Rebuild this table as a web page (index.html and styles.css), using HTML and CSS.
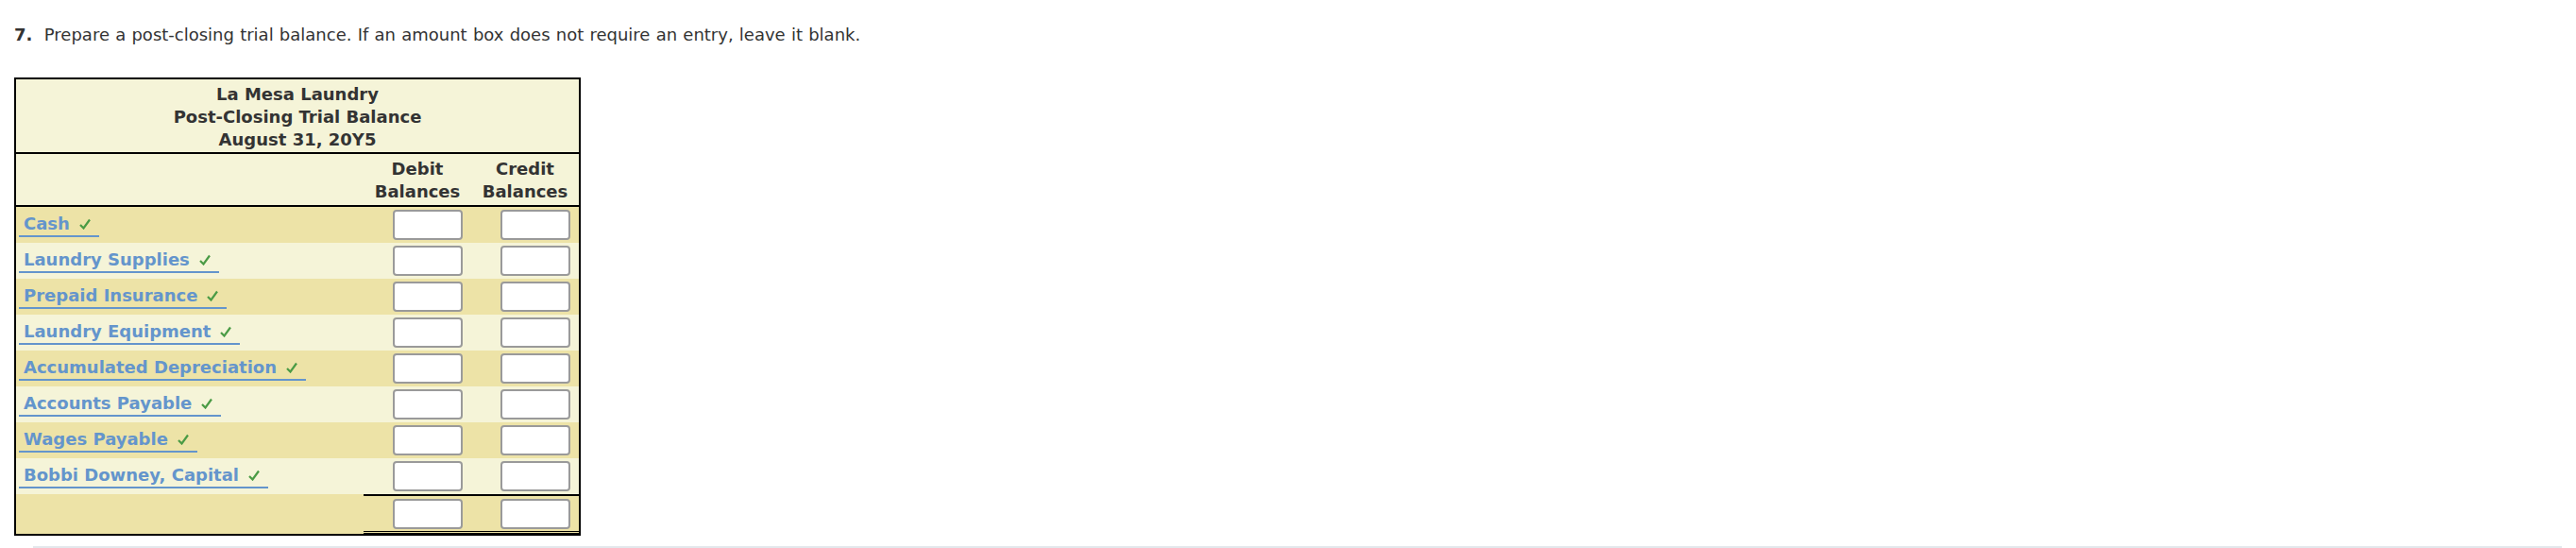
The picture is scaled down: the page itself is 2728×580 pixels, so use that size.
FILE: index.html
```html
<!DOCTYPE html>
<html>
<head>
  <meta charset="utf-8">
  <title>Post-Closing Trial Balance</title>
  <link rel="stylesheet" href="styles.css">
</head>
<body>
  <p class="question"><strong>7.</strong>&nbsp; Prepare a post-closing trial balance. If an amount box does not require an entry, leave it blank.</p>

  <table class="ledger">
    <colgroup>
      <col class="col-label">
      <col class="col-amount">
      <col class="col-amount">
    </colgroup>
    <tr class="title-row">
      <th colspan="3">La Mesa Laundry<br>Post-Closing Trial Balance<br>August 31, 20Y5</th>
    </tr>
    <tr class="head-row">
      <th></th>
      <th>Debit<br>Balances</th>
      <th>Credit<br>Balances</th>
    </tr>
    <tr class="row dark">
      <td class="label"><span class="account">Cash<svg class="check" viewBox="0 0 12 12"><path d="M1 7 L4.5 10.5 L11 1.5"/></svg></span></td>
      <td class="amount"><input type="text"></td>
      <td class="amount"><input type="text"></td>
    </tr>
    <tr class="row light">
      <td class="label"><span class="account">Laundry Supplies<svg class="check" viewBox="0 0 12 12"><path d="M1 7 L4.5 10.5 L11 1.5"/></svg></span></td>
      <td class="amount"><input type="text"></td>
      <td class="amount"><input type="text"></td>
    </tr>
    <tr class="row dark">
      <td class="label"><span class="account">Prepaid Insurance<svg class="check" viewBox="0 0 12 12"><path d="M1 7 L4.5 10.5 L11 1.5"/></svg></span></td>
      <td class="amount"><input type="text"></td>
      <td class="amount"><input type="text"></td>
    </tr>
    <tr class="row light">
      <td class="label"><span class="account">Laundry Equipment<svg class="check" viewBox="0 0 12 12"><path d="M1 7 L4.5 10.5 L11 1.5"/></svg></span></td>
      <td class="amount"><input type="text"></td>
      <td class="amount"><input type="text"></td>
    </tr>
    <tr class="row dark">
      <td class="label"><span class="account">Accumulated Depreciation<svg class="check" viewBox="0 0 12 12"><path d="M1 7 L4.5 10.5 L11 1.5"/></svg></span></td>
      <td class="amount"><input type="text"></td>
      <td class="amount"><input type="text"></td>
    </tr>
    <tr class="row light">
      <td class="label"><span class="account">Accounts Payable<svg class="check" viewBox="0 0 12 12"><path d="M1 7 L4.5 10.5 L11 1.5"/></svg></span></td>
      <td class="amount"><input type="text"></td>
      <td class="amount"><input type="text"></td>
    </tr>
    <tr class="row dark">
      <td class="label"><span class="account">Wages Payable<svg class="check" viewBox="0 0 12 12"><path d="M1 7 L4.5 10.5 L11 1.5"/></svg></span></td>
      <td class="amount"><input type="text"></td>
      <td class="amount"><input type="text"></td>
    </tr>
    <tr class="row light">
      <td class="label"><span class="account">Bobbi Downey, Capital<svg class="check" viewBox="0 0 12 12"><path d="M1 7 L4.5 10.5 L11 1.5"/></svg></span></td>
      <td class="amount"><input type="text"></td>
      <td class="amount"><input type="text"></td>
    </tr>
    <tr class="total-row dark">
      <td class="label"></td>
      <td class="amount"><input type="text"></td>
      <td class="amount"><input type="text"></td>
    </tr>
  </table>

  <div class="next-section"></div>
</body>
</html>
```

FILE: styles.css
```css
html {
  overflow: hidden;
}

body {
  margin: 0;
  padding: 25px 15px 0 15px;
  font-family: "DejaVu Sans", Verdana, sans-serif;
  font-size: 18px;
  line-height: 24px;
  color: #333;
  background: #fff;
}

.question {
  margin: 0 0 33px 0;
  word-spacing: 0.5px;
}

.ledger {
  width: 600px;
  border: 2px solid #000;
  border-spacing: 0;
  table-layout: fixed;
}

.col-label {
  width: 368px;
}

.col-amount {
  width: 114px;
}

.ledger th {
  font-weight: bold;
  color: #333;
  padding: 0;
}

.title-row th {
  background: #f5f4d8;
  padding: 4px 0 1px 0;
  text-align: center;
  border-bottom: 2px solid #000;
}

.head-row th {
  background: #f5f4d8;
  padding: 4px 0 2px 0;
  text-align: center;
  border-bottom: 2px solid #000;
  vertical-align: top;
}

.row {
  height: 38px;
}

.dark td {
  background: #ede3a7;
}

.light td {
  background: #f5f4d8;
}

.ledger td {
  padding: 0;
}

.ledger td.label {
  padding: 6px 0 0 3px;
  vertical-align: top;
}

.account {
  display: inline-block;
  padding: 0 9px 0 5px;
  border-bottom: 2px solid #6495cc;
  color: #6495cc;
  font-weight: bold;
  white-space: nowrap;
}

.check {
  width: 12px;
  height: 12px;
  margin-left: 10px;
  vertical-align: baseline;
}

.check path {
  fill: none;
  stroke: #4a9b45;
  stroke-width: 2.2;
}

.ledger td.amount {
  text-align: right;
  padding-right: 9px;
  vertical-align: middle;
}

.amount input {
  display: inline-block;
  box-sizing: border-box;
  width: 74px;
  height: 32px;
  margin: 0;
  padding: 0 4px;
  border: 2px solid #9a9a9a;
  border-radius: 4px;
  background: #fff;
  font-family: inherit;
  font-size: 16px;
  vertical-align: middle;
}

.total-row td.amount {
  border-top: 2px solid #000;
  border-bottom: 3px double #000;
  height: 37px;
  padding-top: 0;
}

.next-section {
  margin: 11px 0 0 20px;
  height: 20px;
  background: #e3e8ec;
}
```
